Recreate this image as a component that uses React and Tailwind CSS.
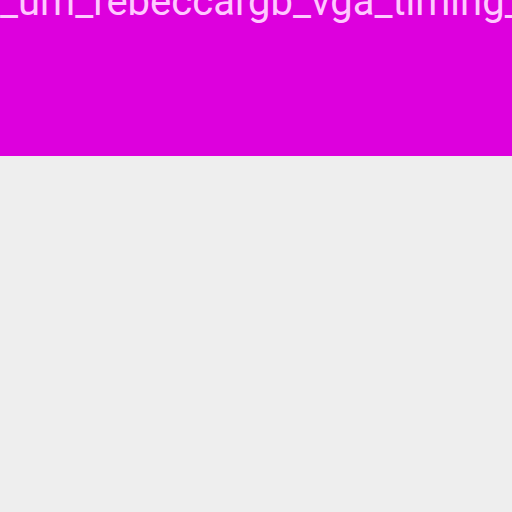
export default function App() {
  return (
    <div className="min-h-[512px] bg-[#eeeeee] font-['Roboto',sans-serif]">
      <header className="h-[156px] bg-[#dd00dd] overflow-hidden flex">
        <h1 className="mt-[-22px] whitespace-nowrap text-[40px] leading-[48px] text-[#ffc8ff]">
          _um_rebeccargb_vga_timing_test
        </h1>
      </header>
    </div>
  );
}
